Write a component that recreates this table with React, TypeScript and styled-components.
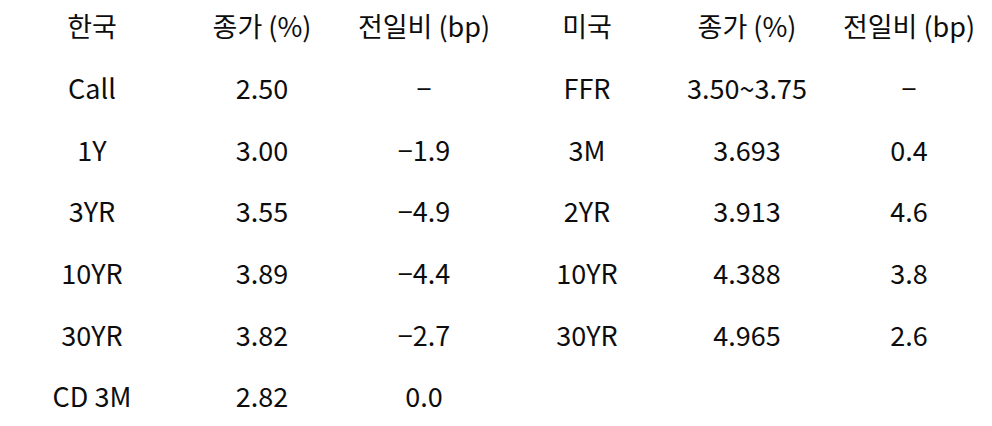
import React from "react";
import styled, { createGlobalStyle } from "styled-components";

const Global = createGlobalStyle`
  html, body { margin: 0; padding: 0; background: #ffffff; overflow: hidden; }
  body { font-family: "Noto Sans CJK KR", "Noto Sans", sans-serif; color: #0d0d0d; }
`;

const Table = styled.div`
  display: grid;
  grid-template-columns: 184px 156px 168px 158px 162px 162px;
  grid-auto-rows: 61.67px;
  margin-top: -5px;
  width: 992px;
`;

const Cell = styled.div`
  display: flex;
  align-items: center;
  justify-content: center;
  font-size: 27px;
  line-height: 1;
  white-space: nowrap;
  font-weight: 400;
`;

const head = ["한국", "종가 (%)", "전일비 (bp)", "미국", "종가 (%)", "전일비 (bp)"];
const rows = [
  ["Call", "2.50", "−", "FFR", "3.50~3.75", "−"],
  ["1Y", "3.00", "−1.9", "3M", "3.693", "0.4"],
  ["3YR", "3.55", "−4.9", "2YR", "3.913", "4.6"],
  ["10YR", "3.89", "−4.4", "10YR", "4.388", "3.8"],
  ["30YR", "3.82", "−2.7", "30YR", "4.965", "2.6"],
  ["CD 3M", "2.82", "0.0", "", "", ""],
];

export default function App() {
  return (
    <>
      <Global />
      <Table>
        {head.map((h, i) => (
          <Cell key={"h" + i}>{h}</Cell>
        ))}
        {rows.map((r, ri) =>
          r.map((c, ci) => <Cell key={ri + "-" + ci}>{c}</Cell>)
        )}
      </Table>
    </>
  );
}
